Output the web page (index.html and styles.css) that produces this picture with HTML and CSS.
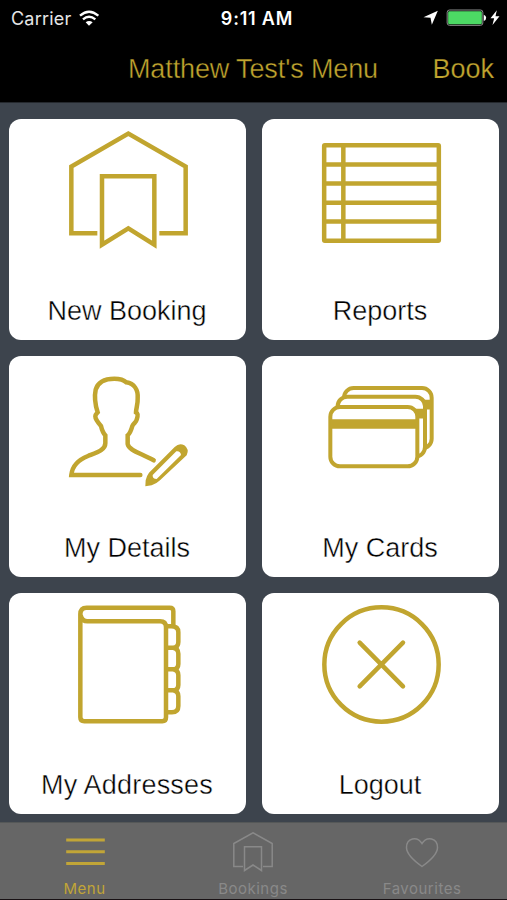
FILE: index.html
```
<!DOCTYPE html>
<html lang="en">
<head>
<meta charset="utf-8">
<title>Menu</title>
<link rel="stylesheet" href="styles.css">
</head>
<body>
<header class="top">
  <div class="status">
    <div class="status-left">
      <span class="carrier">Carrier</span>
      <svg class="wifi" viewBox="240 28 60 48"><g fill="none" stroke="#fff" stroke-width="7"><path d="M243 45Q270 21 298 45"/><path d="M252 56Q270 40 289 56"/></g><path d="M260 65Q270 57 281 65L270 75Z" fill="#fff"/></svg>
    </div>
    <span class="time">9:11 AM</span>
    <svg class="battery" viewBox="510 28 230 54"><path d="M511 53L554 33L536 75L532 54Z" fill="#fff"/><rect x="582" y="31" width="107" height="46" rx="7" fill="none" stroke="#8d8f8e" stroke-width="3"/><rect x="585" y="35" width="101" height="39" rx="4" fill="#4cd964"/><path d="M692 45Q699 48 699 54Q699 61 692 64Z" fill="#fff"/><path d="M731 32L712 56H723L718 76L739 50H727Z" fill="#fff"/></svg>
  </div>
  <nav class="navbar">
    <h1 class="title">Matthew Test's Menu</h1>
    <a class="book">Book</a>
  </nav>
</header>
<main class="grid">
  <section class="card">
    <svg class="icon" viewBox="201 63 360 360"><path d="M292 370H214V170L385 71L557 170V370H478M306 199H463V404L385 355L306 404Z"/></svg>
    <span class="label">New Booking</span>
  </section>
  <section class="card">
    <svg class="icon" viewBox="201 63 360 360"><rect x="213.500" y="106" width="344" height="286" rx="2"/><path d="M271 106V392M214 163.500H557M214 220.500H557M214 278H557M214 334.500H557"/></svg>
    <span class="label">Reports</span>
  </section>
  <section class="card">
    <svg class="icon" viewBox="201 66 360 360"><path stroke-linecap="round" d="M421 387H214C217 357 236 341 264 330C292 319 316 312 316 292V268C310 262 306 253 303 240C294 230 286 221 286 211C286 204 290 203 293 199C286 177 283 150 287 131C294 107 318 98 343 98C357 98 370 100 379 109C402 113 415 130 413 157C414 174 408 188 408 199C415 202 413 212 410 221C408 231 401 230 397 240C393 255 390 262 383 268V294C386 313 421 321 461 343"/><path class="fill" fill-rule="evenodd" d="M436 421L437 403Q440 389 447 380L524 303Q538 289 553 298Q569 310 560 328L480 403Q470 413 455 418ZM458 387Q457 399 470 399L543 327Q541 314 529 316Z"/></svg>
    <span class="label">My Details</span>
  </section>
  <section class="card">
    <svg class="icon" viewBox="201 66 360 360"><g stroke-width="12"><rect x="273" y="126" width="263" height="181" rx="29" fill="#fff"/><path stroke-width="29" d="M273 176H536"/><rect x="254" y="152" width="262" height="180" rx="29" fill="#fff"/><path stroke-width="29" d="M254 203H516"/><rect x="232" y="183" width="261" height="178" rx="29" fill="#fff"/><path stroke-width="28" d="M232 234H493"/></g></svg>
    <span class="label">My Cards</span>
  </section>
  <section class="card">
    <svg class="icon" viewBox="201 63 360 360"><path d="M520 124V82Q520 71 509 71H260Q241 71 241 91V400Q241 412 253 412H487Q498 412 498 400V130Q498 112 480 112H262Q247 112 242 94M498 127H514Q535 127 535 145V174Q535 191 519 191H498M519 191Q535 193 535 209V240Q535 256 519 256H498M519 256Q535 258 535 274V303Q535 319 519 319H498M519 319Q535 321 535 337V366Q535 385 516 385H498"/></svg>
    <span class="label wide">My Addresses</span>
  </section>
  <section class="card">
    <svg class="icon" viewBox="201 63 360 360"><circle cx="385.500" cy="241.500" r="171.500"/><path stroke-linecap="round" d="M320 176L450 307M450 176L320 307"/></svg>
    <span class="label">Logout</span>
  </section>
</main>
<footer class="tabs">
  <a class="tab active">
    <svg class="tab-icon" viewBox="0 0 40 40"><path stroke-width="3" d="M1.200 8H39.800M1.200 19.700H39.800M1.200 31.500H39.800"/></svg>
    <span class="tab-label">Menu</span>
  </a>
  <a class="tab">
    <svg class="tab-icon" viewBox="0 0 40 40"><path stroke-width="1.500" d="M10 34.500H.800V11.500L20 .800L39.200 11.500V34.500H30M11.500 14.800H28.500V38.500L20 33L11.500 38.500Z"/></svg>
    <span class="tab-label">Bookings</span>
  </a>
  <a class="tab">
    <svg class="tab-icon" viewBox="0 0 40 40"><path stroke-width="1.500" d="M20 34.500C13 29.500 4.500 23 4.500 15.500C4.500 6 15 3.500 20 11.500C25 3.500 35.500 6 35.500 15.500C35.500 23 27 29.500 20 34.500Z"/></svg>
    <span class="tab-label">Favourites</span>
  </a>
</footer>
</body>
</html>
```
FILE: styles.css
```
* { box-sizing: border-box; }

body {
  margin: 0;
  height: 900px;
  display: flex;
  flex-direction: column;
  overflow: hidden;
  background: #3d444d;
  font-family: "Liberation Sans", sans-serif;
}

.top {
  height: 103px;
  background: #000;
  border-bottom: 1px solid #24282d;
}

.status {
  display: grid;
  grid-template-columns: 1fr auto 1fr;
  align-items: center;
  height: 36px;
  padding: 0 7px 0 11px;
  color: #fff;
  font-family: Inter, sans-serif;
  font-size: 18px;
}

.status-left { display: flex; align-items: center; gap: 8px; }
.carrier { color: #e6e6e6; letter-spacing: 0.2px; }
.wifi { width: 20px; height: 16px; }
.time { padding-left: 3px; font-weight: 600; letter-spacing: 0.8px; }
.battery { width: 77px; height: 18px; justify-self: end; }

.navbar {
  display: grid;
  grid-template-columns: 1fr auto 1fr;
  align-items: center;
  height: 66px;
  padding: 0 13px 0 12px;
  color: #c1a52f;
}

.title {
  grid-column: 2;
  margin: 0;
  font-size: 27px;
  font-weight: 400;
  letter-spacing: -0.12px;
  white-space: nowrap;
  -webkit-text-stroke: 0.4px #000;
}

.book {
  justify-self: end;
  font-size: 27px;
  -webkit-text-stroke: 0.25px #000;
}

.grid {
  height: 719px;
  display: grid;
  grid-template-columns: 237px 237px;
  grid-auto-rows: 220.5px;
  gap: 16.5px 16px;
  padding: 16px 8px 0 9px;
}

.card {
  display: flex;
  flex-direction: column;
  align-items: center;
  justify-content: space-between;
  padding: 12px 1px 13px 0;
  border-radius: 12px;
  background: #fff;
}

.icon {
  width: 120px;
  height: 120px;
  overflow: visible;
  fill: none;
  stroke: #c1a52f;
  stroke-width: 13.5;
}

.icon .fill { fill: #c1a52f; stroke: none; }

.label {
  font-size: 27px;
  line-height: 32px;
  color: #000;
  white-space: nowrap;
  -webkit-text-stroke: 0.4px #fff;
}

.label.wide { letter-spacing: 0.2px; }

.tabs {
  height: 78px;
  display: grid;
  grid-template-columns: repeat(3, 1fr);
  border-top: 1px solid #555858;
  border-bottom: 1px solid #181114;
  background: #666;
}

.tab {
  display: flex;
  flex-direction: column;
  align-items: center;
  padding: 9px 1px 0 0;
  color: #898989;
}

.tab.active { padding-right: 0; color: #c1a537; }
.tab-icon { width: 40px; height: 40px; fill: none; stroke: currentColor; }

.tab-label {
  margin-top: 7px;
  font: 400 15px/20px Inter, sans-serif;
  letter-spacing: 0.5px;
}
```
